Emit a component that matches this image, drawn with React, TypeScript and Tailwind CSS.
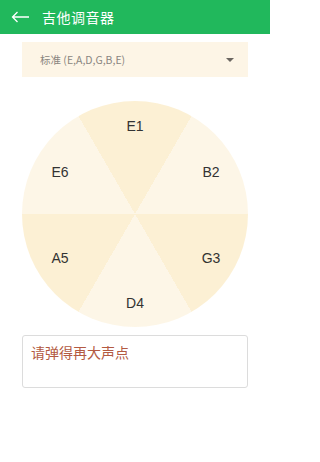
import { useState } from 'react';

const strings = [
  { note: 'E1', pos: 'left-[100px] top-[15px]' },
  { note: 'B2', pos: 'left-[176px] top-[61px]' },
  { note: 'G3', pos: 'left-[176px] top-[147px]' },
  { note: 'D4', pos: 'left-[100px] top-[192px]' },
  { note: 'A5', pos: 'left-[25px] top-[147px]' },
  { note: 'E6', pos: 'left-[25px] top-[61px]' },
];

export default function App() {
  const [tuning] = useState('标准 (E,A,D,G,B,E)');

  return (
    <div className="flex h-[462px] w-[270px] flex-col bg-white font-['Noto_Sans_CJK_SC','Noto_Sans',sans-serif]">
      <header className="flex h-[34px] items-center bg-[#21b85c] text-white">
        <button className="flex h-full w-[38px] items-center justify-center pl-[2px]">
          <svg width="19" height="12" viewBox="0 0 19 12" fill="none" stroke="white" strokeWidth="1.3">
            <path d="M18 6H1.5M6.5 1L1.5 6l5 5" />
          </svg>
        </button>
        <h1 className="ml-[4px] text-[14px] font-normal tracking-[0.5px]">吉他调音器</h1>
      </header>

      <main className="flex flex-col px-[22px]">
        <div className="mt-[8px] flex h-[35px] items-center justify-between bg-[#fdf5e6] pl-[18px] pr-[14px]">
          <span className="text-[10.5px] text-[#8a8580]">{tuning}</span>
          <span className="h-0 w-0 border-x-[4px] border-t-[4px] border-x-transparent border-t-[#6b6660]" />
        </div>

        <div className="relative mt-[24px] h-[226px] w-[226px] rounded-full bg-[conic-gradient(#fcf0d4_0deg_30deg,#fdf6e7_30deg_90deg,#fcf0d4_90deg_150deg,#fdf6e7_150deg_210deg,#fcf0d4_210deg_270deg,#fdf6e7_270deg_330deg,#fcf0d4_330deg_360deg)]">
          {strings.map((s) => (
            <span
              key={s.note}
              className={`absolute ${s.pos} w-[26px] text-center font-['Liberation_Sans',sans-serif] text-[14px] leading-[20px] text-[#333]`}
            >
              {s.note}
            </span>
          ))}
        </div>

        <div className="mt-[8px] h-[53px] rounded-[3px] border border-[#dcdcdc] px-[8px] pt-[6px]">
          <p className="text-[14px] leading-[20px] text-[#b35a42]">请弹得再大声点</p>
        </div>
      </main>
    </div>
  );
}
